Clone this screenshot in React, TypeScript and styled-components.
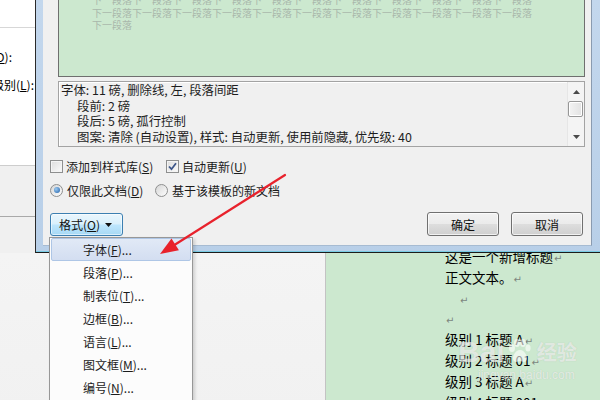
import React from "react";
import styled, { createGlobalStyle } from "styled-components";

const UI_FONT = `"Noto Sans CJK SC", "Noto Sans", sans-serif`;

const GlobalStyle = createGlobalStyle`
  html, body { margin: 0; padding: 0; background: #f0f0f0; }
  body { font-family: ${UI_FONT}; }
  * { box-sizing: border-box; }
`;

const Page = styled.div`
  position: relative;
  width: 600px;
  height: 400px;
  overflow: hidden;
  display: flex;
  flex-direction: column;
  font-family: ${UI_FONT};
  font-size: 12px;
  color: #1b1b1b;
`;

const TopRow = styled.div`
  display: flex;
  height: 253px;
  flex: none;
`;

/* ---------- back dialog strip on the left ---------- */
const BackPanel = styled.div`
  width: 35px;
  flex: none;
  display: flex;
  flex-direction: column;
  overflow: hidden;
  background: #f0f0f0;
`;
const BackHeader = styled.div`
  height: 28px;
  flex: none;
  background: #fff;
  border-bottom: 1px solid #d7d7d7;
`;
const BackBody = styled.div`
  height: 138px;
  flex: none;
  background: #fff;
  border-bottom: 1px solid #cdcdcd;
  padding-top: 21px;
  display: flex;
  flex-direction: column;
  gap: 12px;
`;
const BackStrip = styled.div`
  height: 51px;
  flex: none;
  background: #f0f0f0;
  border-bottom: 1px solid #a9a9a9;
`;
const BackLabel = styled.div<{ $right: number }>`
  display: flex;
  justify-content: flex-end;
  padding-right: ${(p) => p.$right}px;
  height: 16px;
  line-height: 16px;
  white-space: nowrap;
  color: #000;
  & > span { flex: none; }
`;

/* ---------- modify style dialog ---------- */
const DialogFrame = styled.div`
  flex: 1;
  display: flex;
  background: linear-gradient(#c3d7ed, #b8cfe8);
  border-left: 1px solid #2a2a2a;
  border-bottom: 1px solid #1c1c1c;
  padding: 0 8px 6px 7px;
  box-shadow: inset 0 -1px 0 #79cbe4;
`;
const DialogContent = styled.div`
  flex: 1;
  display: flex;
  flex-direction: column;
  background: #f0f0f0;
  border-right: 1px solid #8a9bb0;
  border-bottom: 1px solid #a6bbd2;
  padding: 0 6px 0 7px;
`;
const Preview = styled.div`
  height: 77px;
  flex: none;
  margin-left: 8px;
  background: #cce8cf;
  border: 1px solid #6f6f6f;
  border-top: none;
  overflow: hidden;
  padding-left: 33px;
`;
const PreviewLines = styled.div`
  margin-top: -6px;
  font-size: 10px;
  line-height: 12.5px;
  color: #a9b7ab;
  white-space: nowrap;
`;
const Description = styled.div`
  height: 66px;
  flex: none;
  margin: 4px 0 0 8px;
  display: flex;
  background: #f0f0f0;
  border: 1px solid #a3a3a3;
  box-shadow: inset 1px 1px 0 #fff;
`;
const DescText = styled.div`
  flex: 1;
  overflow: hidden;
  white-space: nowrap;
  padding: 1px 0 0 2px;
  font-size: 12.4px;
  line-height: 15.6px;
  color: #1e1e1e;
`;
const DescLine = styled.div<{ $indent?: boolean }>`
  padding-left: ${(p) => (p.$indent ? 16 : 0)}px;
`;
const Scrollbar = styled.div`
  width: 17px;
  flex: none;
  display: flex;
  flex-direction: column;
  background: #f4f4f4;
  border-left: 1px solid #e6e6e6;
`;
const ScrollCell = styled.div`
  height: 19px;
  flex: none;
  display: flex;
  align-items: center;
  justify-content: center;
`;
const ScrollThumb = styled.div`
  height: 16px;
  width: 15px;
  flex: none;
  border: 1px solid #979797;
  border-radius: 2px;
  background: linear-gradient(90deg, #f3f3f3, #e2e2e2);
  box-shadow: inset 0 0 0 1px #fff;
`;
const ScrollSpacer = styled.div`
  flex: 1;
`;

const OptionRow = styled.div<{ $top: number }>`
  display: flex;
  align-items: center;
  height: 16px;
  flex: none;
  margin-top: ${(p) => p.$top}px;
`;
const OptionItem = styled.label<{ $width?: number }>`
  display: flex;
  align-items: center;
  gap: 3px;
  width: ${(p) => (p.$width ? `${p.$width}px` : "auto")};
  white-space: nowrap;
  color: #1b1b1b;
`;
const CheckBox = styled.span`
  width: 13px;
  height: 13px;
  flex: none;
  border: 1px solid #8e8f8f;
  background: linear-gradient(135deg, #dcdcdc, #fbfbfb);
  box-shadow: inset 0 0 0 1px #f4f4f4;
  display: flex;
  align-items: center;
  justify-content: center;
`;
const Radio = styled.span<{ $on?: boolean }>`
  width: 13px;
  height: 13px;
  flex: none;
  border-radius: 50%;
  border: 1px solid #8e8f8f;
  background: linear-gradient(135deg, #d6d6d6, #fdfdfd);
  display: flex;
  align-items: center;
  justify-content: center;
  margin-right: 1px;
  &::after {
    content: "";
    display: ${(p) => (p.$on ? "block" : "none")};
    width: 6px;
    height: 6px;
    border-radius: 50%;
    background: radial-gradient(circle at 35% 35%, #9ccaf1, #1f5fa8);
  }
`;

const ButtonRow = styled.div`
  display: flex;
  align-items: flex-start;
  margin-top: 14px;
  padding-right: 2px;
  gap: 12px;
`;
const FormatButton = styled.div`
  width: 73px;
  height: 23px;
  margin-top: 1px;
  display: flex;
  align-items: center;
  padding-left: 8px;
  gap: 5px;
  border: 1px solid #3c7fb1;
  border-radius: 3px;
  background: linear-gradient(#eaf6fd 0%, #d9f0fc 48%, #bee6fd 52%, #a7d9f5 100%);
  box-shadow: inset 0 0 0 1px rgba(255, 255, 255, 0.55);
  color: #111;
`;
const Spacer = styled.div`
  flex: 1;
`;
const PushButton = styled.div`
  width: 72px;
  height: 24px;
  display: flex;
  align-items: center;
  justify-content: center;
  border: 1px solid #707070;
  border-radius: 3px;
  background: linear-gradient(#f2f2f2 0%, #ebebeb 48%, #dddddd 52%, #cfcfcf 100%);
  box-shadow: inset 0 0 0 1px rgba(255, 255, 255, 0.7);
  color: #111;
`;

/* ---------- bottom: word window ---------- */
const BottomRow = styled.div`
  flex: 1;
  display: flex;
`;
const Sidebar = styled.div`
  width: 326px;
  flex: none;
  background: linear-gradient(#f4f4f4, #f1f1f1);
  border-right: 1px solid #c3c3c3;
`;
const DocPage = styled.div`
  flex: 1;
  background: #cce8cf;
  overflow: hidden;
  padding-left: 119px;
`;
const DocText = styled.div`
  margin-top: -7px;
  font-family: "Noto Sans CJK SC", sans-serif;
  font-size: 13.5px;
  line-height: 20.8px;
  color: #000;
  white-space: nowrap;
`;
const DocLine = styled.div<{ $indent?: number }>`
  height: 20.8px;
  padding-left: ${(p) => p.$indent ?? 0}px;
`;
const ParaMark = styled.span`
  font-family: "DejaVu Sans", sans-serif;
  font-size: 10px;
  color: #7d867e;
  margin-left: 1px;
`;

/* ---------- overlays ---------- */
const Menu = styled.div`
  position: absolute;
  left: 49px;
  top: 237px;
  width: 144px;
  height: 175px;
  background: #fcfcfc;
  border: 1px solid #979797;
  padding: 0 1px;
  box-shadow: 2px 2px 3px rgba(0, 0, 0, 0.15);
`;
const MenuItem = styled.div<{ $active?: boolean }>`
  height: 23px;
  display: flex;
  align-items: center;
  padding-left: 31px;
  border: 1px solid ${(p) => (p.$active ? "#aec6e6" : "transparent")};
  border-radius: 2px;
  background: ${(p) => (p.$active ? "linear-gradient(#e1e9f6, #d3def1)" : "transparent")};
  color: #1b1b1b;
  white-space: nowrap;
`;
const ArrowOverlay = styled.svg`
  position: absolute;
  left: 0;
  top: 0;
  pointer-events: none;
`;
const Watermark = styled.div`
  position: absolute;
  left: 458px;
  top: 336px;
  display: flex;
  flex-direction: column;
  align-items: flex-start;
  pointer-events: none;
  color: rgba(255, 255, 255, 0.6);
  text-shadow: 0 0 1px rgba(120, 120, 120, 0.3);
`;
const WatermarkTop = styled.div`
  display: flex;
  align-items: center;
  gap: 2px;
`;
const WmLatin = styled.span`
  font-family: "Liberation Sans", Arial, sans-serif;
  font-weight: bold;
  font-size: 30px;
  line-height: 32px;
`;
const WmCjk = styled.span`
  font-family: "Noto Sans CJK SC", sans-serif;
  font-weight: bold;
  font-size: 20px;
  line-height: 32px;
  margin-left: 4px;
`;
const WmUrl = styled.span`
  font-family: "Liberation Sans", Arial, sans-serif;
  font-size: 12px;
  line-height: 12px;
  margin-left: 20px;
  margin-top: 1px;
`;

const Tri = ({ dir, color = "#4a4a4a" }: { dir: "up" | "down"; color?: string }) => (
  <svg width="7" height="4" viewBox="0 0 7 4">
    {dir === "up" ? <path d="M0 4 L3.5 0 L7 4 Z" fill={color} /> : <path d="M0 0 L7 0 L3.5 4 Z" fill={color} />}
  </svg>
);

const rep = (n: number) => "下一段落".repeat(n);

export default function App() {
  return (
    <>
      <GlobalStyle />
      <Page>
        <TopRow>
          <BackPanel>
            <BackHeader />
            <BackBody>
              <BackLabel $right={23}>
                <span>
                  (<u>D</u>):
                </span>
              </BackLabel>
              <BackLabel $right={1}>
                <span>
                  级别(<u>L</u>):
                </span>
              </BackLabel>
            </BackBody>
            <BackStrip />
          </BackPanel>
          <DialogFrame>
            <DialogContent>
              <Preview>
                <PreviewLines>
                  <div>{rep(11)}</div>
                  <div>{rep(11)}</div>
                  <div>{rep(1)}</div>
                </PreviewLines>
              </Preview>
              <Description>
                <DescText>
                  <DescLine>字体: 11 磅, 删除线, 左, 段落间距</DescLine>
                  <DescLine $indent>段前: 2 磅</DescLine>
                  <DescLine $indent>段后: 5 磅, 孤行控制</DescLine>
                  <DescLine $indent>图案: 清除 (自动设置), 样式: 自动更新, 使用前隐藏, 优先级: 40</DescLine>
                </DescText>
                <Scrollbar>
                  <ScrollCell>
                    <Tri dir="up" />
                  </ScrollCell>
                  <ScrollThumb />
                  <ScrollSpacer />
                  <ScrollCell>
                    <Tri dir="down" />
                  </ScrollCell>
                </Scrollbar>
              </Description>
              <OptionRow $top={11}>
                <OptionItem $width={116}>
                  <CheckBox />
                  <span>
                    添加到样式库(<u>S</u>)
                  </span>
                </OptionItem>
                <OptionItem>
                  <CheckBox>
                    <svg width="9" height="9" viewBox="0 0 9 9">
                      <path d="M1 4.5 L3.5 7.2 L8 1.2" fill="none" stroke="#3d5689" strokeWidth="1.8" />
                    </svg>
                  </CheckBox>
                  <span>
                    自动更新(<u>U</u>)
                  </span>
                </OptionItem>
              </OptionRow>
              <OptionRow $top={8}>
                <OptionItem $width={105}>
                  <Radio $on />
                  <span>
                    仅限此文档(<u>D</u>)
                  </span>
                </OptionItem>
                <OptionItem>
                  <Radio />
                  <span>基于该模板的新文档</span>
                </OptionItem>
              </OptionRow>
              <ButtonRow>
                <FormatButton>
                  <span>
                    格式(<u>O</u>)
                  </span>
                  <Tri dir="down" color="#111" />
                </FormatButton>
                <Spacer />
                <PushButton>确定</PushButton>
                <PushButton>取消</PushButton>
              </ButtonRow>
            </DialogContent>
          </DialogFrame>
        </TopRow>
        <BottomRow>
          <Sidebar />
          <DocPage>
            <DocText>
              <DocLine>
                这是一个新增标题<ParaMark>↵</ParaMark>
              </DocLine>
              <DocLine>
                正文文本。<ParaMark>↵</ParaMark>
              </DocLine>
              <DocLine $indent={14}>
                <ParaMark>↵</ParaMark>
              </DocLine>
              <DocLine>
                <ParaMark>↵</ParaMark>
              </DocLine>
              <DocLine>
                级别 1 标题 A<ParaMark>↵</ParaMark>
              </DocLine>
              <DocLine>
                级别 2 标题 01<ParaMark>↵</ParaMark>
              </DocLine>
              <DocLine>
                级别 3 标题 A<ParaMark>↵</ParaMark>
              </DocLine>
              <DocLine>
                级别 4 标题 001<ParaMark>↵</ParaMark>
              </DocLine>
            </DocText>
          </DocPage>
        </BottomRow>

        <Menu>
          <MenuItem $active>
            字体(<u>F</u>)...
          </MenuItem>
          <MenuItem>
            段落(<u>P</u>)...
          </MenuItem>
          <MenuItem>
            制表位(<u>T</u>)...
          </MenuItem>
          <MenuItem>
            边框(<u>B</u>)...
          </MenuItem>
          <MenuItem>
            语言(<u>L</u>)...
          </MenuItem>
          <MenuItem>
            图文框(<u>M</u>)...
          </MenuItem>
          <MenuItem>
            编号(<u>N</u>)...
          </MenuItem>
        </Menu>

        <Watermark>
          <WatermarkTop>
            <WmLatin>Bai</WmLatin>
            <svg width="24" height="26" viewBox="0 0 24 26" fill="rgba(255,255,255,0.6)">
              <ellipse cx="5" cy="9" rx="3" ry="4" />
              <ellipse cx="10" cy="4" rx="3" ry="4" />
              <ellipse cx="16" cy="4" rx="3" ry="4" />
              <ellipse cx="21" cy="9" rx="2.6" ry="3.6" />
              <path d="M13 11 C8 11 4 19 7 22 C9 24 11 22 13 22 C15 22 17 24 19 22 C22 19 18 11 13 11 Z" />
            </svg>
            <WmCjk>经验</WmCjk>
          </WatermarkTop>
          <WmUrl>jingyan.baidu.com</WmUrl>
        </Watermark>

        <ArrowOverlay width="600" height="400" viewBox="0 0 600 400">
          <line x1="285" y1="175" x2="174" y2="245.2" stroke="#e8222c" strokeWidth="2.2" strokeLinecap="round" />
          <polygon points="160,254 178.9,250.3 171.5,238.5" fill="#e8222c" />
        </ArrowOverlay>
      </Page>
    </>
  );
}
